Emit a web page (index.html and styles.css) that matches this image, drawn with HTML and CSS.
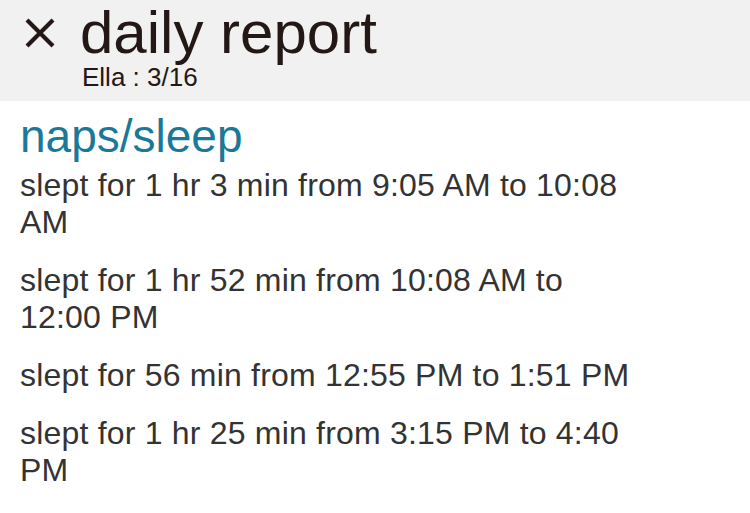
FILE: index.html
```html
<!DOCTYPE html>
<html lang="en">
<head>
    <meta charset="UTF-8">
    <meta name="viewport" content="width=device-width, initial-scale=1.0">
    <title>daily report</title>
    <link rel="stylesheet" href="styles.css">
</head>
<body>
<div class="header">
    <h1 class="title">
        <svg class="close-icon" width="30" height="30" viewBox="0 0 30 30">
            <path d="M2 2 L28 28 M28 2 L2 28" stroke="#231815" stroke-width="4.2" fill="none"/>
        </svg>
        <span>daily report</span>
    </h1>
    <div class="subtitle">Ella : 3/16</div>
</div>
<div class="content">
    <h2 class="section-title">naps/sleep</h2>
    <div class="entry">slept for 1 hr 3 min from 9:05 AM to 10:08 AM</div>
    <div class="entry">slept for 1 hr 52 min from 10:08 AM to 12:00 PM</div>
    <div class="entry">slept for 56 min from 12:55 PM to 1:51 PM</div>
    <div class="entry">slept for 1 hr 25 min from 3:15 PM to 4:40 PM</div>
</div>
</body>
</html>
```

FILE: styles.css
```css
* {
    margin: 0;
    padding: 0;
    box-sizing: border-box;
    font-family: "Liberation Sans", Arial, sans-serif;
}

body {
    background: #fff;
    width: 750px;
    height: 513px;
    overflow: hidden;
}

.header {
    background: #f1f1f1;
    height: 101px;
    color: #231815;
}

.title {
    display: flex;
    align-items: center;
    font-size: 60px;
    line-height: 66px;
    font-weight: normal;
    padding-left: 25px;
}

.close-icon {
    margin-right: 25px;
    flex-shrink: 0;
}

.subtitle {
    padding-left: 82px;
    font-size: 26px;
    line-height: 22px;
}

.content {
    padding: 0 110px 0 20px;
}

.section-title {
    margin-top: 12px;
    font-size: 46px;
    line-height: 46px;
    font-weight: normal;
    color: #1a7898;
}

.section-title + .entry {
    margin-top: 8px;
}

.entry {
    font-size: 32px;
    line-height: 37px;
    letter-spacing: 0.2px;
    color: #333;
    margin-bottom: 21px;
}
```
